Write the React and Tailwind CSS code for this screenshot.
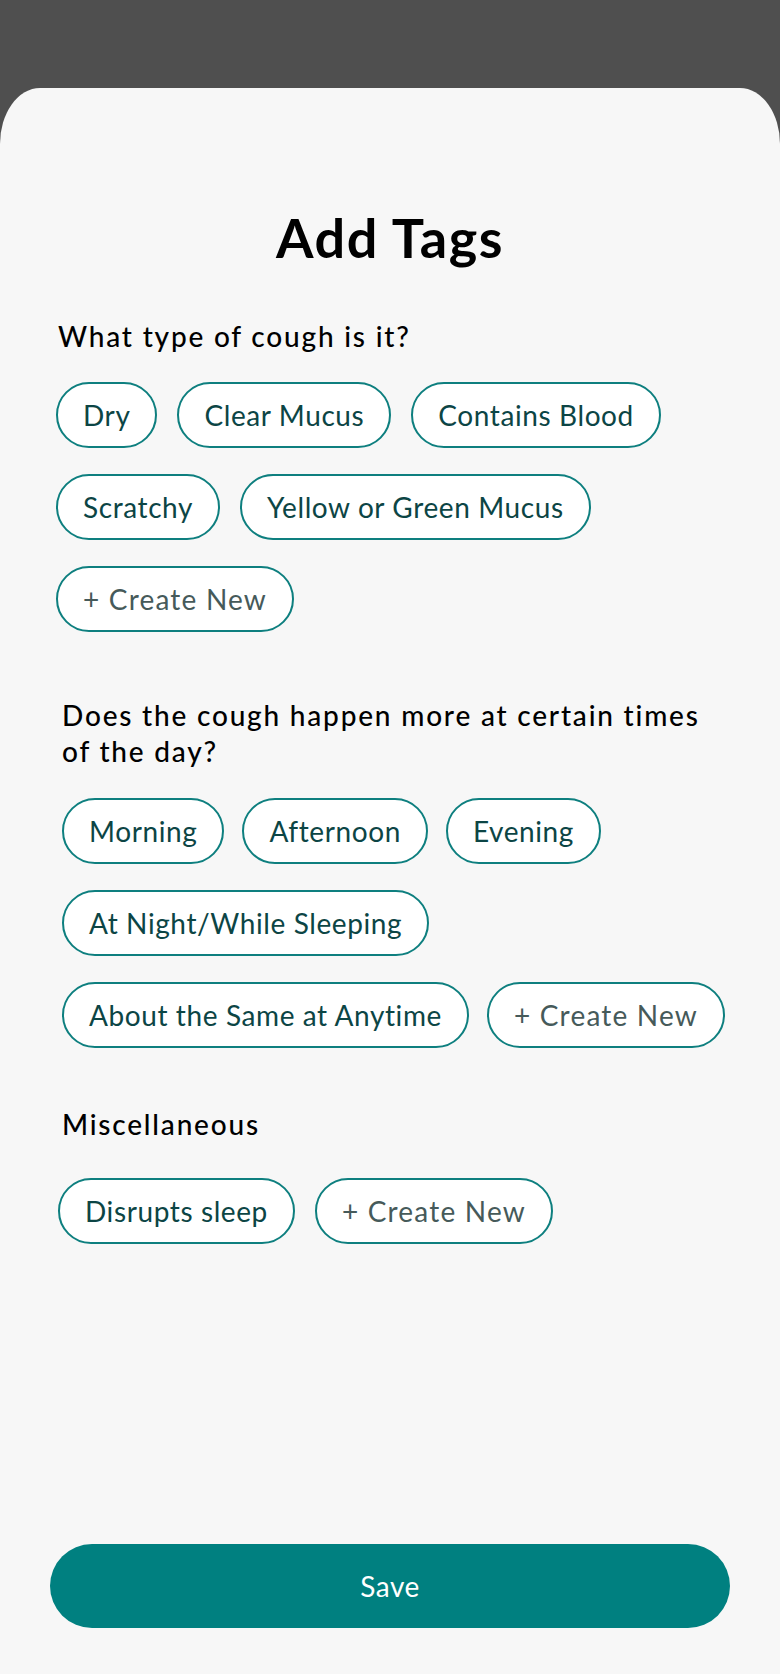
import React from 'react';

const sections = [
  {
    title: 'What type of cough is it?',
    tags: ['Dry', 'Clear Mucus', 'Contains Blood', 'Scratchy', 'Yellow or Green Mucus'],
  },
  {
    title: (
      <>
        Does the cough happen more at certain times
        <br />
        of the day?
      </>
    ),
    tags: ['Morning', 'Afternoon', 'Evening', 'At Night/While Sleeping', 'About the Same at Anytime'],
  },
  {
    title: 'Miscellaneous',
    tags: ['Disrupts sleep'],
  },
];

const Tag = ({ label, create }) => (
  <button
    className={`h-[66px] px-[25px] rounded-full border-2 border-[#0e7f7f] bg-white text-[28px] leading-none whitespace-nowrap ${create ? 'text-[#465a5a] tracking-[1.2px]' : 'text-[#0c4545] tracking-[0.6px]'}`}
  >
    {label}
  </button>
);

const Heading = ({ children }) => (
  <h2 className="text-[28px] leading-[36px] font-medium tracking-[1.8px] text-black">{children}</h2>
);

const App = () => {
  return (
    <div className="min-h-[1674px] bg-[#4f4f4f] flex flex-col" style={{ fontFamily: 'Lato, "Open Sans", sans-serif' }}>
      <div className="h-[88px] shrink-0"></div>
      <div className="flex-1 bg-[#f7f7f7] rounded-tl-[40px_56px] rounded-tr-[40px_56px] flex flex-col pb-[46px]">
        <h1 className="pt-[120px] text-center text-[54px] leading-[60px] font-bold tracking-[1.5px] text-black">Add Tags</h1>

        <div className="pl-[58px] pr-[40px] mt-[50px]">
          <Heading>{sections[0].title}</Heading>
          <div className="mt-[28px] -ml-[2px] flex flex-wrap gap-x-[20px] gap-y-[26px]">
            {sections[0].tags.map((t) => <Tag key={t} label={t} />)}
            <Tag label="+ Create New" create />
          </div>
        </div>

        <div className="pl-[62px] pr-[40px] mt-[65px]">
          <Heading>{sections[1].title}</Heading>
          <div className="mt-[29px] flex flex-wrap gap-x-[18px] gap-y-[26px]">
            {sections[1].tags.map((t, i) => <Tag key={i} label={t} />)}
            <Tag label="+ Create New" create />
          </div>
        </div>

        <div className="pl-[62px] pr-[40px] mt-[58px]">
          <Heading>{sections[2].title}</Heading>
          <div className="mt-[36px] -ml-[4px] flex flex-wrap gap-x-[20px] gap-y-[26px]">
            {sections[2].tags.map((t) => <Tag key={t} label={t} />)}
            <Tag label="+ Create New" create />
          </div>
        </div>

        <div className="mt-auto px-[50px]">
          <button className="w-full h-[84px] rounded-full bg-[#008080] text-white text-[28px] tracking-[0.5px]">Save</button>
        </div>
      </div>
    </div>
  );
};

export default App;
